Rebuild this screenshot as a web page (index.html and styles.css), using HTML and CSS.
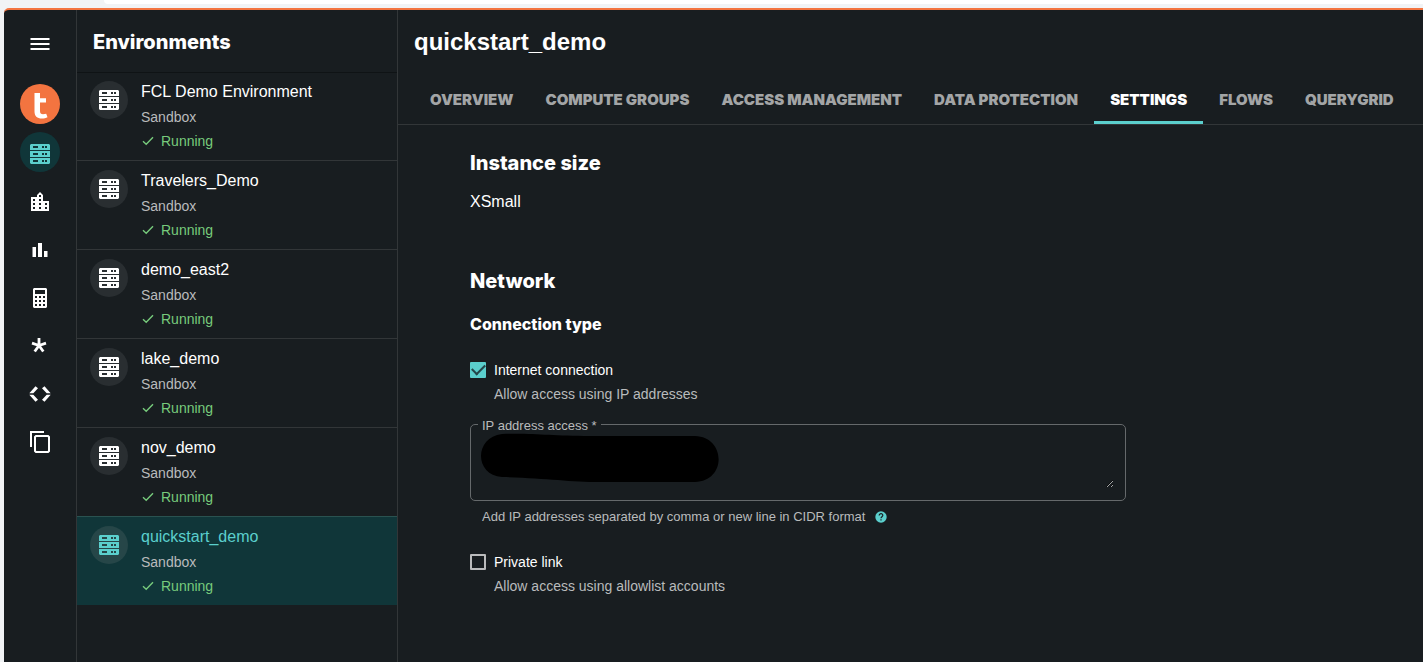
FILE: index.html
```html
<!DOCTYPE html>
<html lang="en">
<head>
<meta charset="utf-8">
<meta name="viewport" content="width=device-width, initial-scale=1">
<title>quickstart_demo</title>
<link rel="stylesheet" href="styles.css">
</head>
<body>
<svg class="symbols" aria-hidden="true">
  <symbol id="server" viewBox="0 0 20 20">
    <path fill="currentColor" fill-rule="evenodd" d="M1 0h18l1 1v5H0V1zM3 2v2h5V2zM12 2v2h2V2zM15 2v2h2V2zM0 7h20v6H0zM3 9v2h5V9zM12 9v2h2V9zM15 9v2h2V9zM0 14h20v5l-1 1H1l-1-1zM3 16v2h5v-2zM12 16v2h2v-2zM15 16v2h2v-2z"/>
  </symbol>
  <symbol id="check" viewBox="0 0 12 12">
    <path fill="none" stroke="currentColor" stroke-width="1.4" d="M1 6.200 4.200 9.200 11 2.200"/>
  </symbol>
</svg>
<div class="browser-edge"></div>
<div class="app">
  <nav class="rail" aria-label="Main">
    <button class="rail-menu" aria-label="Menu"><svg width="20" height="14"><path fill="currentColor" d="M.5 1h19v2H.5zM.5 6h19v2H.5zM.5 11h19v2H.5z"/></svg></button>
    <a class="rail-item rail-logo" href="#" aria-label="Home"><svg width="40" height="40"><path fill="#fff" d="M14.500 9h5.500v5.200h6v4.300h-6v8.500c0 2.300 1 3.300 3 3.300 1.200 0 2.200-.3 3.200-.5l1.300 3.500c-1.700.8-3.300 1.200-5.500 1.200-5 0-7.500-2.500-7.500-7z"/></svg></a>
    <a class="rail-item rail-active" href="#" aria-label="Environments"><svg width="20" height="20"><use href="#server"/></svg></a>
    <a class="rail-item" href="#" aria-label="Organization"><svg width="24" height="24"><path fill="currentColor" d="M15 11V5l-3-3-3 3v2H3v14h18V11h-6zm-8 8H5v-2h2v2zm0-4H5v-2h2v2zm0-4H5V9h2v2zm6 8h-2v-2h2v2zm0-4h-2v-2h2v2zm0-4h-2V9h2v2zm0-4h-2V5h2v2zm6 12h-2v-2h2v2zm0-4h-2v-2h2v2z"/></svg></a>
    <a class="rail-item" href="#" aria-label="Usage"><svg width="24" height="24"><path fill="currentColor" d="M4.500 9H8v10H4.500zM10 5h4v14h-4zM16 13h3.500v6H16z"/></svg></a>
    <a class="rail-item" href="#" aria-label="Calculator"><svg width="20" height="20"><path fill="currentColor" fill-rule="evenodd" d="M4 0h12l1 1v18l-1 1H4l-1-1V1zM5 2v4h10V2zM5 8v2h2V8zM9 8v2h2V8zM13 8v2h2V8zM5 12v2h2v-2zM9 12v2h2v-2zM13 12v2h2v-2zM5 16v2h2v-2zM9 16v2h2v-2zM13 16v2h2v-2z"/></svg></a>
    <a class="rail-item" href="#" aria-label="Integrations"><svg width="20" height="20"><path fill="none" stroke="currentColor" stroke-width="2.800" d="M9 9.500V2M9 9.500l7-2.300M9 9.500l4.300 6M9 9.500l-4.300 6M9 9.500 2 7.200"/></svg></a>
    <a class="rail-item" href="#" aria-label="Developer"><svg width="22" height="20"><path fill="currentColor" d="M.3 9.200 6.500 2.300 9 4.300 4.300 9.200zM.3 10.800l6.200 6.900L9 15.700l-4.700-4.900zM21.700 9.200l-6.200-6.900L13 4.300l4.700 4.900zM21.700 10.800l-6.200 6.900-2.500-2 4.700-4.900z"/></svg></a>
    <a class="rail-item" href="#" aria-label="Resources"><svg width="20" height="22"><path fill="none" stroke="currentColor" stroke-width="2" d="M1 16V1h13M6 5h12l1 1v14l-1 1H6l-1-1V6z"/></svg></a>
  </nav>
  <aside class="environments">
    <header class="environments-header"><h2 class="title">Environments</h2></header>
    <ul class="env-list">
      <li><a class="env" href="#"><span class="avatar"><svg width="20" height="20"><use href="#server"/></svg></span><span class="env-text"><span class="env-name">FCL Demo Environment</span><span class="env-kind">Sandbox</span><span class="env-status"><svg width="12" height="12"><use href="#check"/></svg>Running</span></span></a></li>
      <li><a class="env" href="#"><span class="avatar"><svg width="20" height="20"><use href="#server"/></svg></span><span class="env-text"><span class="env-name">Travelers_Demo</span><span class="env-kind">Sandbox</span><span class="env-status"><svg width="12" height="12"><use href="#check"/></svg>Running</span></span></a></li>
      <li><a class="env" href="#"><span class="avatar"><svg width="20" height="20"><use href="#server"/></svg></span><span class="env-text"><span class="env-name">demo_east2</span><span class="env-kind">Sandbox</span><span class="env-status"><svg width="12" height="12"><use href="#check"/></svg>Running</span></span></a></li>
      <li><a class="env" href="#"><span class="avatar"><svg width="20" height="20"><use href="#server"/></svg></span><span class="env-text"><span class="env-name">lake_demo</span><span class="env-kind">Sandbox</span><span class="env-status"><svg width="12" height="12"><use href="#check"/></svg>Running</span></span></a></li>
      <li><a class="env before-selected" href="#"><span class="avatar"><svg width="20" height="20"><use href="#server"/></svg></span><span class="env-text"><span class="env-name">nov_demo</span><span class="env-kind">Sandbox</span><span class="env-status"><svg width="12" height="12"><use href="#check"/></svg>Running</span></span></a></li>
      <li><a class="env selected" href="#" aria-current="page"><span class="avatar"><svg width="20" height="20"><use href="#server"/></svg></span><span class="env-text"><span class="env-name">quickstart_demo</span><span class="env-kind">Sandbox</span><span class="env-status"><svg width="12" height="12"><use href="#check"/></svg>Running</span></span></a></li>
    </ul>
  </aside>
  <main class="main">
    <h1 class="page-title">quickstart_demo</h1>
    <nav class="tabs" aria-label="Environment">
      <a class="tab" href="#">OVERVIEW</a>
      <a class="tab" href="#">COMPUTE GROUPS</a>
      <a class="tab" href="#">ACCESS MANAGEMENT</a>
      <a class="tab" href="#">DATA PROTECTION</a>
      <a class="tab tab-active" href="#" aria-current="page">SETTINGS</a>
      <a class="tab" href="#">FLOWS</a>
      <a class="tab" href="#">QUERYGRID</a>
    </nav>
    <form class="settings">
      <section class="size">
        <h2 class="title">Instance size</h2>
        <p class="size-value">XSmall</p>
      </section>
      <section>
        <h2 class="title">Network</h2>
        <h3 class="subtitle">Connection type</h3>
        <div class="option">
          <input class="checkbox" type="checkbox" id="internet" checked>
          <label class="option-label" for="internet">Internet connection</label>
          <p class="option-hint">Allow access using IP addresses</p>
        </div>
        <div class="field">
          <label class="field-label" for="ips">IP address access *</label>
          <textarea class="field-input" id="ips"></textarea>
          <svg class="redaction" width="240" height="50" aria-hidden="true"><path d="M22 1C55 0 70 3 110 3H215C246 4 247 48 215 49H120C90 49 65 45 22 44C-6 42-6 4 22 1z"/></svg>
        </div>
        <p class="helper">Add IP addresses separated by comma or new line in CIDR format
          <svg width="12" height="12" viewBox="0 0 12 12"><circle cx="6" cy="6" r="5.700" fill="#5bcfcd"/><path fill="none" stroke="#181d20" stroke-width="1.200" d="M4.200 4.600C4.200 2 7.900 2.200 7.800 4.500 7.700 5.700 6 5.800 6 7.300M6 8.300v1.300"/></svg>
        </p>
        <div class="option">
          <input class="checkbox" type="checkbox" id="private">
          <label class="option-label" for="private">Private link</label>
          <p class="option-hint">Allow access using allowlist accounts</p>
        </div>
      </section>
    </form>
  </main>
</div>
</body>
</html>
```
FILE: styles.css
```css
:root {
  --bg: #181d20;
  --line: #323638;
  --teal: #5bcfcd;
  --muted: #b9bbbc;
}

* { box-sizing: border-box; }

body {
  display: flex;
  flex-direction: column;
  min-height: 100vh;
  margin: 0;
  background: #f1f3f5;
  color: #fff;
  font: 14px/24px "Liberation Sans", Arial, sans-serif;
}

h1, h2, h3, p, ul { margin: 0; padding: 0; }
ul { list-style: none; }
a { color: inherit; text-decoration: none; }
svg { display: block; flex: none; }

.symbols { position: absolute; width: 0; height: 0; }

.browser-edge {
  height: 4px;
  margin: 0 0 4px 104px;
  border-bottom-left-radius: 4px;
  background: #fff;
}

.app {
  display: flex;
  flex: 1;
  margin-left: 4px;
  border-top: 2px solid #f37440;
  border-top-left-radius: 5px;
  background: var(--bg);
}

.rail {
  display: flex;
  flex: none;
  flex-direction: column;
  align-items: center;
  gap: 8px;
  width: 73px;
  padding-top: 14px;
  border-right: 1px solid var(--line);
}

.rail-menu {
  display: grid;
  place-items: center;
  width: 40px;
  height: 40px;
  margin-bottom: 12px;
  padding: 0;
  border: 0;
  background: none;
  color: #fff;
}

.rail-item {
  display: grid;
  place-items: center;
  width: 40px;
  height: 40px;
  padding-top: 4px;
  border-radius: 50%;
}

.rail-logo { padding: 0; background: #f37440; }
.rail-active { background: #103639; color: var(--teal); }

.environments {
  flex: none;
  width: 321px;
  border-right: 1px solid var(--line);
}

.environments-header {
  position: relative;
  height: 62px;
  padding: 20px 16px;
  box-shadow: 0 1px #0f1315;
}

.title, .subtitle {
  font-family: Inter, sans-serif;
  font-size: 20px;
  font-weight: 800;
  line-height: 24px;
}

.subtitle { font-size: 16px; }

.env {
  display: flex;
  gap: 13px;
  padding: 7px 13px;
  border-bottom: 1px solid var(--line);
}

.avatar {
  display: grid;
  flex: none;
  place-items: center;
  width: 38px;
  height: 38px;
  margin-top: 2px;
  border-radius: 50%;
  background: #292e31;
}

.env-text { display: flex; flex-direction: column; }
.env-name { font-size: 16px; line-height: 26px; }
.env-kind { color: var(--muted); }

.env-status {
  display: flex;
  align-items: center;
  gap: 7px;
  padding-left: 1px;
  color: #77cb7c;
}

.before-selected { border-color: #2a5250; }
.selected { border: 0; background: #103639; }
.selected .avatar { background: #264648; color: var(--teal); }
.selected .env-name { color: var(--teal); }

.main { flex: 1; min-width: 0; }

.page-title {
  padding: 16px;
  font-size: 24px;
  line-height: 32px;
}

.tabs {
  display: flex;
  margin-top: 2px;
  padding: 0 16px;
  border-bottom: 1px solid var(--line);
}

.tab {
  padding: 12px 16px 9px;
  border-bottom: 3px solid transparent;
  color: #a3a5a6;
  font-family: Inter, sans-serif;
  font-size: 15px;
  font-weight: 900;
  white-space: nowrap;
}

.tab-active { border-color: var(--teal); color: #fff; }

.settings { max-width: 800px; padding: 26px 72px; }
.size { margin-bottom: 55px; }
.size-value { margin-top: 15px; font-size: 16px; }
.subtitle { margin: 19px 0 22px; }

.option {
  display: grid;
  grid-template-columns: 16px 1fr;
  column-gap: 8px;
  align-items: center;
}

.checkbox {
  display: grid;
  place-items: center;
  width: 16px;
  height: 16px;
  margin: 0;
  border: 2px solid #babbbc;
  border-radius: 1px;
  appearance: none;
}

.checkbox:checked { border-color: var(--teal); background: var(--teal); }

.checkbox:checked::before {
  width: 11px;
  height: 6px;
  margin-bottom: 4px;
  border: solid #24474a;
  border-width: 0 0 2px 2px;
  content: "";
  rotate: -45deg;
}

.option-hint { grid-column: 2; color: var(--muted); }

.field {
  position: relative;
  margin-top: 18px;
  padding: 11px;
  border: 1px solid #65696b;
  border-radius: 5px;
}

.field-label {
  position: absolute;
  top: -8px;
  left: 7px;
  padding: 0 4px;
  background: var(--bg);
  color: var(--muted);
  font-size: 13px;
  line-height: 18px;
}

.field-input {
  display: block;
  width: 100%;
  height: 52px;
  margin-bottom: 1px;
  padding: 0;
  border: 0;
  outline: 0;
  background: none;
  color: #fff;
  font: inherit;
  color-scheme: dark;
}

.redaction { position: absolute; top: 8px; left: 9px; }

.helper {
  display: flex;
  align-items: center;
  gap: 10px;
  margin: 4px 0 21px 12px;
  color: var(--muted);
  font-size: 13px;
}
```
